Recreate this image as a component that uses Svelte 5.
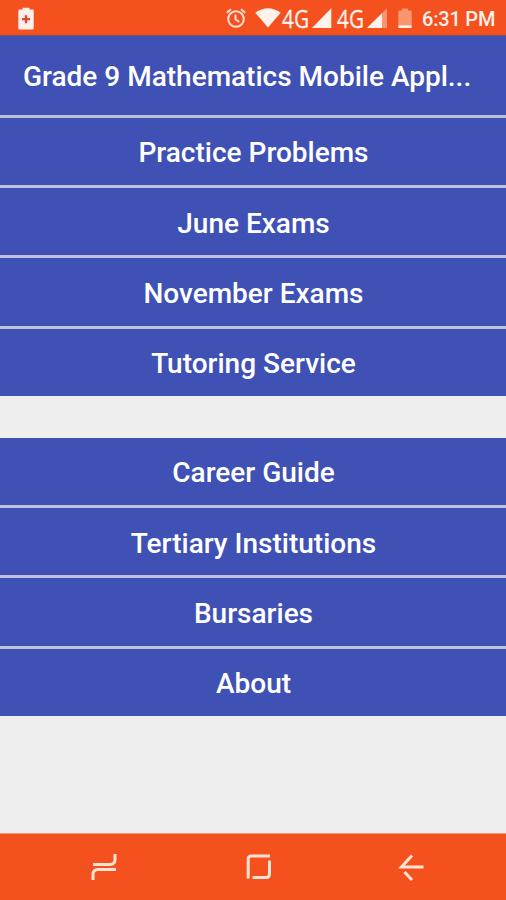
<script>
    const examItems = [
        "Practice Problems",
        "June Exams",
        "November Exams",
        "Tutoring Service",
    ];
    const infoItems = [
        "Career Guide",
        "Tertiary Institutions",
        "Bursaries",
        "About",
    ];
</script>

<div class="screen">
    <div class="status-bar">
        <svg class="charge" width="16" height="23" viewBox="0 0 16 23">
            <path d="M1.5 2.5H4.5V0.8H11.5V2.5H14.5Q15.7 2.5 15.7 3.7V21.3Q15.7 22.5 14.5 22.5H1.5Q.3 22.5 .3 21.3V3.7Q.3 2.5 1.5 2.5Z" fill="#fff0ed" />
            <path d="M8 8.2V16.2M4 12.2H12" stroke="#e7422f" stroke-width="2.3" />
        </svg>
        <svg class="alarm" width="20" height="20" viewBox="0 0 20 20" fill="none" stroke="#ffe0d2" stroke-width="2">
            <circle cx="10" cy="11" r="7.8" />
            <path d="M.8 4.7L5 1.2M19.2 4.7L15 1.2M9.5 6.5V11.3L13.2 13.8" />
        </svg>
        <svg class="wifi" width="26" height="20" viewBox="0 0 26 20">
            <path d="M.3 4.8Q13 -4.3 25.7 4.8L13 19.6Z" fill="#fff1ec" />
        </svg>
        <svg class="signal" width="50" height="34" viewBox="0 0 50 34">
            <text x="0" y="26" textLength="27" lengthAdjust="spacingAndGlyphs">4G</text>
            <path d="M30 26L49.3 6.3V26Z" fill="#fff1ec" />
        </svg>
        <svg class="signal second" width="51" height="34" viewBox="0 0 51 34">
            <text x="0" y="26" textLength="27" lengthAdjust="spacingAndGlyphs">4G</text>
            <path d="M30 26L50 6.3V26Z" fill="#fa966f" />
            <path d="M30 26L45 11.2V26Z" fill="#fff1ec" />
        </svg>
        <svg class="battery" width="14" height="21" viewBox="0 0 14 21">
            <path d="M1 2.5H4V.5H10V2.5H13Q13.7 2.5 13.7 3.5V17.5H.3V3.5Q.3 2.5 1 2.5Z" fill="#fa966f" />
            <path d="M.3 17.3H13.7V20H.3Z" fill="#fff1ec" />
        </svg>
        <span class="time">6:31 PM</span>
    </div>

    <header>
        <h1>Grade 9 Mathematics Mobile Appl...</h1>
    </header>

    <main>
        <div class="menu">
            {#each examItems as item}
                <button>{item}</button>
            {/each}
        </div>
        <div class="menu">
            {#each infoItems as item}
                <button>{item}</button>
            {/each}
        </div>
    </main>

    <nav>
        <svg width="28" height="30" viewBox="0 0 28 30">
            <path d="M2 12.5H19Q24 12.5 24 7.5V2M25 17.5H7Q2 17.5 2 22.5V28" />
        </svg>
        <svg width="28" height="30" viewBox="0 0 28 30">
            <path d="M3.2 26.5V7Q3.2 4 6.2 4H25M24.5 8.5V22Q24.5 25.5 21 25.5H7.5" />
        </svg>
        <svg width="28" height="30" viewBox="0 0 28 30">
            <path d="M14 3.5L3.5 15H25.5M6.5 20L14 28" />
        </svg>
    </nav>
</div>

<style>
    :global(body) {
        margin: 0;
    }

    .screen {
        display: flex;
        flex-direction: column;
        width: 506px;
        height: 900px;
        overflow: hidden;
        background: #eeeeee;
        color: #fff;
        font-family: Roboto, sans-serif;
        font-weight: 500;
    }

    .status-bar {
        display: flex;
        align-items: flex-start;
        box-sizing: border-box;
        height: 36px;
        padding: 8px 0 0 18px;
        background: #f4511e;
        border-bottom: 1px solid #824b5f;
    }

    .status-bar svg {
        flex: none;
    }

    .charge {
        margin-top: -1px;
    }

    .alarm {
        margin-left: 192px;
    }

    .wifi {
        margin-left: 9px;
    }

    .status-bar .signal {
        margin-top: -6.5px;
        margin-left: 1px;
        overflow: visible;
    }

    .status-bar .second {
        margin-left: 5px;
    }

    .signal text {
        font-family: "Open Sans", sans-serif;
        font-size: 25px;
        font-weight: 400;
        fill: #fff1ec;
        stroke: #fff1ec;
        stroke-width: 0.3px;
    }

    .battery {
        margin-left: 10px;
    }

    .time {
        margin-left: 10px;
        color: #fff1ec;
        font-size: 20px;
        letter-spacing: -0.2px;
        line-height: 22px;
        white-space: nowrap;
    }

    header {
        display: flex;
        align-items: center;
        box-sizing: border-box;
        height: 81.6px;
        padding: 4px 23px 0;
        background: #3f51b5;
        border-bottom: 3px solid #c0bfd9;
    }

    h1 {
        margin: 0;
        font-size: 28px;
        font-weight: 500;
        line-height: 34px;
        white-space: nowrap;
    }

    main {
        flex: 1;
    }

    .menu {
        display: grid;
        grid-template-rows: repeat(4, 67.4px);
        row-gap: 3px;
        height: 278.6px;
        margin-bottom: 41.4px;
        background: #c0c2dc;
    }

    button {
        padding: 3px 0 0 1px;
        border: 0;
        background: #3f51b5;
        color: inherit;
        font: inherit;
        font-size: 28px;
    }

    nav {
        display: flex;
        align-items: center;
        justify-content: space-between;
        box-sizing: border-box;
        height: 67px;
        padding: 0 80px 0 91px;
        background: #f4511e;
        border-top: 1px solid #f49a82;
    }

    nav path {
        fill: none;
        stroke: #ffe3d3;
        stroke-width: 3;
    }
</style>
